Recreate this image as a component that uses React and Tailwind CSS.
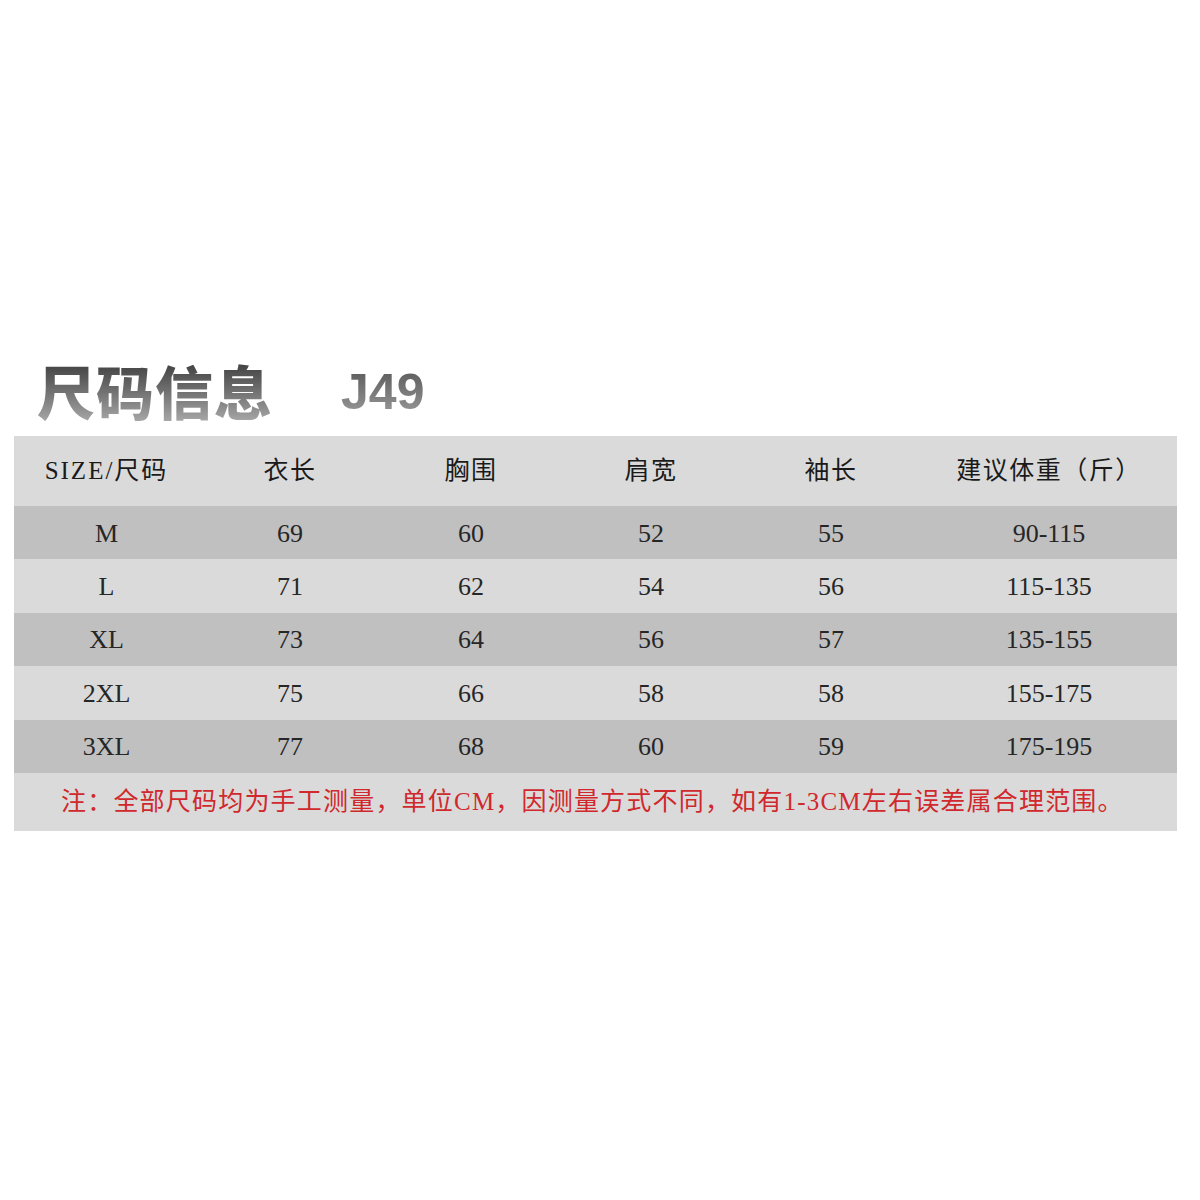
import React from "react";

const cols = ["SIZE/尺码", "衣长", "胸围", "肩宽", "袖长", "建议体重（斤）"];
const rows = [
  ["M", "69", "60", "52", "55", "90-115"],
  ["L", "71", "62", "54", "56", "115-135"],
  ["XL", "73", "64", "56", "57", "135-155"],
  ["2XL", "75", "66", "58", "58", "155-175"],
  ["3XL", "77", "68", "60", "59", "175-195"],
];

const serif = { fontFamily: '"Liberation Serif", "Noto Sans CJK SC", serif' };

export default function App() {
  return (
    <div className="w-[1200px] h-[1200px] bg-white flex flex-col">
      <div className="h-[358px]" />
      <div className="h-[78px] flex items-end pl-[37px] pb-[14px] gap-[68px]">
        <span
          className="text-[58px] leading-[64px] font-black tracking-[1px] bg-gradient-to-b from-[#3a3a3a] to-[#a8a8a8] bg-clip-text text-transparent"
          style={{ fontFamily: '"Noto Sans CJK SC", sans-serif' }}
        >
          尺码信息
        </span>
        <span
          className="text-[50px] leading-[56px] font-bold bg-gradient-to-b from-[#555555] to-[#a0a0a0] bg-clip-text text-transparent mb-[2px]"
          style={{ fontFamily: '"Liberation Sans", Arial, sans-serif' }}
        >
          J49
        </span>
      </div>
      <div className="ml-[14px] w-[1163px] text-[#262626]" style={serif}>
        <div className="grid grid-cols-[185px_182px_180px_180px_180px_1fr] h-[70px] bg-[#dadada] items-center text-[25px] text-[#1a1a1a]">
          {cols.map((c, i) => (
            <div
              key={i}
              className={i === 0 ? "text-center tracking-[2px]" : "text-center tracking-[1.5px]"}
            >
              {c}
            </div>
          ))}
        </div>
        {rows.map((r, ri) => (
          <div
            key={ri}
            className={
              "grid grid-cols-[185px_182px_180px_180px_180px_1fr] h-[53.4px] items-center text-[26px] pt-[1px] " +
              (ri % 2 === 0 ? "bg-[#c0c0c0]" : "bg-[#dadada]")
            }
          >
            {r.map((c, i) => (
              <div key={i} className="text-center">{c}</div>
            ))}
          </div>
        ))}
        <div className="h-[58px] bg-[#dadada] flex items-center pl-[47px] text-[25px] text-[#d0282c] tracking-[1.2px]">
          注：全部尺码均为手工测量，单位CM，因测量方式不同，如有1-3CM左右误差属合理范围。
        </div>
      </div>
    </div>
  );
}
